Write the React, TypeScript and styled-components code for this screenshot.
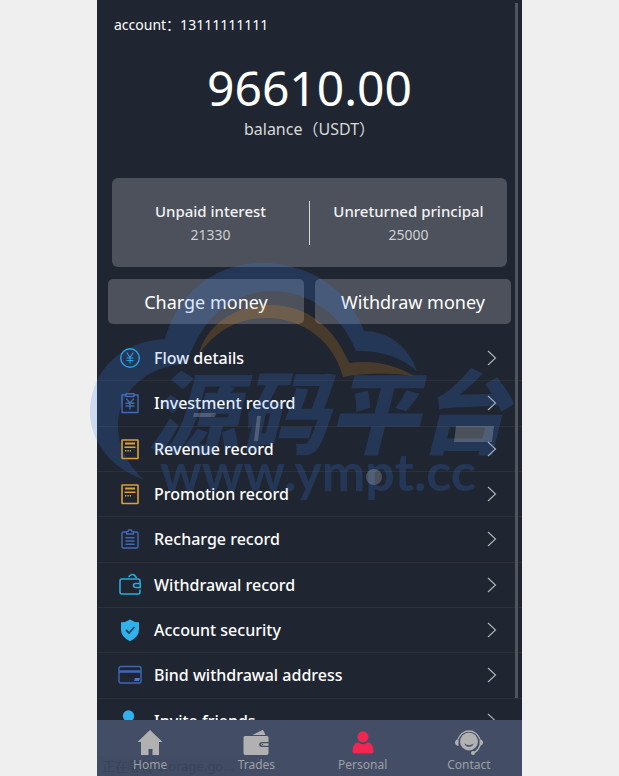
import React from "react";
import styled, { createGlobalStyle } from "styled-components";

const GlobalStyle = createGlobalStyle`
  * { box-sizing: border-box; }
  body {
    margin: 0;
    background: #efefef;
    font-family: "Noto Sans", "Noto Sans CJK SC", sans-serif;
    color: #fff;
  }
`;

const Phone = styled.div`
  position: relative;
  display: flex;
  flex-direction: column;
  width: 100%;
  max-width: 425px;
  height: 100vh;
  margin: 0 auto;
  background: #1f2632;
`;

const Content = styled.main`
  flex: 1;
  min-height: 0;
  overflow-y: auto;
  scrollbar-width: none;
`;

const Account = styled.div`
  padding: 14px 17px 0;
  font-size: 14px;
  line-height: 22px;
`;

const Balance = styled.section`
  display: flex;
  flex-direction: column;
  align-items: center;
  padding-top: 24px;
`;

const Amount = styled.div`
  font-size: 48px;
  line-height: 56px;
`;

const Caption = styled.div`
  font-size: 16px;
  line-height: 26px;
  color: #d9d9d9;
`;

const Summary = styled.section`
  display: flex;
  align-items: center;
  height: 89px;
  margin: 36px 15px 12px;
  border-radius: 6px;
  background: #4c515c;
`;

const Stat = styled.div`
  flex: 1;
  display: flex;
  flex-direction: column;
  align-items: center;
  line-height: 24px;
`;

const StatLabel = styled.span`
  font-size: 15px;
  font-weight: 500;
  color: #f2f2f2;
`;

const StatValue = styled.span`
  font-size: 14px;
  color: #d0d0d0;
`;

const Separator = styled.div`
  width: 1px;
  height: 44px;
  background: #d8d8d2;
`;

const Actions = styled.div`
  display: flex;
  gap: 11px;
  padding: 0 11px;
  margin-bottom: 12px;
`;

const ActionButton = styled.button`
  flex: 1;
  height: 45px;
  padding: 0;
  border: 0;
  border-radius: 5px;
  background: #4c515c;
  color: #fff;
  font: inherit;
  font-size: 18px;
`;

const Menu = styled.nav`
  display: grid;
  grid-template-rows: repeat(9, 1fr);
  min-height: 408px;
`;

const MenuRow = styled.a`
  display: flex;
  align-items: center;
  padding: 0 24px 0 20px;
  border-bottom: 1px solid #302f33;
  color: #fff;
  font-size: 16px;
  font-weight: 500;
  text-decoration: none;
`;

const MenuLabel = styled.span`
  flex: 1;
  padding-left: 11px;
`;

const ScrollThumb = styled.div`
  position: absolute;
  top: 3px;
  right: 4px;
  bottom: 78px;
  width: 3px;
  background: #50555a;
`;

const TabBar = styled.nav`
  position: relative;
  display: flex;
  height: 56px;
  background: #434e66;
`;

const Tab = styled.a`
  position: relative;
  flex: 1;
  display: flex;
  flex-direction: column;
  align-items: center;
  padding-top: 8px;
  color: #9d9fa2;
  font-size: 12px;
  line-height: 16px;
  text-decoration: none;

  svg { margin-bottom: 1px; }
`;

const LoadingStatus = styled.div`
  position: absolute;
  left: 0;
  bottom: 0;
  height: 20px;
  padding: 0 10px 0 5px;
  border-top-right-radius: 4px;
  background: #414b64;
  color: #3a445a;
  font-size: 13px;
  line-height: 20px;
  white-space: nowrap;
`;

const Watermark = styled.svg`
  position: absolute;
  top: 255px;
  left: -7px;
  pointer-events: none;
`;

const BrandName = styled.text`
  font-family: "Noto Sans CJK SC", sans-serif;
  font-size: 90px;
  font-weight: 900;
  font-style: italic;
`;

const BrandSite = styled.text`
  font-family: Lato, sans-serif;
  font-size: 52px;
  font-weight: 700;
`;

type IconName = "flow" | "invest" | "bill" | "clipboard" | "wallet" | "shield" | "card" | "friend";

const line = (color: string) => ({
  fill: "none",
  stroke: color,
  strokeWidth: 1.4,
  strokeLinecap: "round" as const,
  strokeLinejoin: "round" as const,
});

const drawings: Record<IconName, React.ReactNode> = {
  flow: (
    <g {...line("#2aa5e0")}>
      <circle cx="13" cy="13" r="9.3" />
      <path d="M10 8l3 4.500 3-4.500M13 12.500v5.500M10 13h6M10 15.500h6" strokeWidth="1.100" />
    </g>
  ),
  invest: (
    <g {...line("#436ab4")}>
      <path d="M9 5H5v17.500h16V5h-4M9 3.700h8v2.800H9z" />
      <path d="M9.500 9l3.500 4 3.500-4M13 13v6M9 13.200h8M9 16h8" />
    </g>
  ),
  bill: (
    <g {...line("#e0a02f")}>
      <rect x="5" y="4" width="16" height="18.500" rx="0.5" strokeWidth="1.600" />
      <path d="M8 7.500h10" strokeWidth="2" strokeLinecap="butt" />
      <path d="M8 11.300h10" />
      <path d="M8 14.800h6" strokeDasharray="1.400 1" strokeLinecap="butt" />
    </g>
  ),
  clipboard: (
    <g {...line("#4369b5")}>
      <path d="M9 6H6.500Q5 6 5 7.500v13Q5 22 6.500 22h13q1.500 0 1.500-1.500v-13Q21 6 19.500 6H17" />
      <path d="M9.500 8V6.200q0-.7.7-.7h.8q.5-1.700 2-1.700t2 1.700h.8q.7 0 .7.7V8z" />
      <path d="M9 11.800h8M9 15h8M9 18.200h8" />
    </g>
  ),
  wallet: (
    <g {...line("#2aabdf")} strokeWidth="1.6">
      <path d="M23 11V9q0-2-2-2H5Q3 7 3 9v11q0 2 2 2h16q2 0 2-2v-2" />
      <path d="M23.300 11.500h-4.500q-2.300 0-2.300 2t2.300 2h4.500z" />
      <path d="M12 4.500q3-3.500 6-.7l1.300 1.700" />
    </g>
  ),
  shield: (
    <g>
      <path d="M13 2.500q4.500 3 9 2.800V13q0 7-9 11.200Q4 20 4 13V5.300q4.500.2 9-2.800z" fill="#2fb1ec" />
      <path d="M9 13l3 3 5.500-6" fill="none" stroke="#1f3f58" strokeWidth="1.800" />
    </g>
  ),
  card: (
    <g {...line("#4066b0")}>
      <rect x="2" y="4.500" width="22" height="16.500" rx="2" />
      <path d="M2 9.500h22" strokeWidth="2.600" strokeLinecap="butt" />
      <path d="M18 16h5l-1 3h-5z" fill="#4c76c4" stroke="none" />
    </g>
  ),
  friend: (
    <g fill="#2fb1ec">
      <circle cx="11.500" cy="8" r="5.700" />
      <path d="M2 24q0-9 9.500-9t9.500 9z" />
    </g>
  ),
};

const Chevron = () => (
  <svg width="12" height="18" viewBox="0 0 12 18" fill="none" stroke="#b4b4b6" strokeWidth="1.100">
    <path d="M2 2l7.500 7L2 16" />
  </svg>
);

const menu: { icon: IconName; label: string }[] = [
  { icon: "flow", label: "Flow details" },
  { icon: "invest", label: "Investment record" },
  { icon: "bill", label: "Revenue record" },
  { icon: "bill", label: "Promotion record" },
  { icon: "clipboard", label: "Recharge record" },
  { icon: "wallet", label: "Withdrawal record" },
  { icon: "shield", label: "Account security" },
  { icon: "card", label: "Bind withdrawal address" },
  { icon: "friend", label: "Invite friends" },
];

const tabs: { label: string; art: React.ReactNode }[] = [
  {
    label: "Home",
    art: <path d="M14 2l12.500 12H23v13h-6.500v-6h-4v6H5V14H1.500z" fill="#b1b1b1" />,
  },
  {
    label: "Trades",
    art: (
      <g fill="#b1b1b1">
        <path d="M10.500 7L20 2.200q1-.5 1.500.5L23.500 7z" />
        <path d="M3 8h22q1.500 0 1.500 1.500V14H20q-2.800 0-2.800 2.500T20 19h6.500v6q0 2-2 2H3.500q-2 0-2-2V9.500Q1.500 8 3 8z" />
        <path d="M20.500 15.200h6v2.600h-6q-1.500 0-1.500-1.300t1.500-1.300z" />
        <circle cx="20.500" cy="16.500" r=".7" fill="#434e66" />
      </g>
    ),
  },
  {
    label: "Personal",
    art: (
      <g fill="#f32552">
        <circle cx="14" cy="8.800" r="5.500" />
        <path d="M3.500 23.500q0-8 5.500-9.200 5 3.700 10 0 5.500 1.200 5.500 9.200 0 2-2 2h-17q-2 0-2-2z" />
      </g>
    ),
  },
  {
    label: "Contact",
    art: (
      <g>
        <circle cx="14" cy="13.500" r="9" fill="#b1b1b1" />
        <path d="M9.500 15.500q4.500 3.500 9 0-1 3.200-4.500 3.200t-4.500-3.200z" fill="#434e66" />
        <path d="M3.200 11a11.300 11.300 0 0 1 21.600 0M25 17q-1.500 6-7 8" fill="none" stroke="#b1b1b1" strokeWidth="1.300" />
        <path d="M3.500 11v7Q0 17 0 14.500T3.500 11zM24.500 11v7q3.500-1 3.500-3.500T24.500 11z" fill="#b1b1b1" />
        <circle cx="18" cy="25" r="2" fill="#b1b1b1" />
      </g>
    ),
  },
];

export default function App() {
  return (
    <>
      <GlobalStyle />
      <Phone>
        <Content>
          <Account>account：13111111111</Account>
          <Balance>
            <Amount>96610.00</Amount>
            <Caption>balance（USDT）</Caption>
          </Balance>
          <Summary>
            <Stat>
              <StatLabel>Unpaid interest</StatLabel>
              <StatValue>21330</StatValue>
            </Stat>
            <Separator />
            <Stat>
              <StatLabel>Unreturned principal</StatLabel>
              <StatValue>25000</StatValue>
            </Stat>
          </Summary>
          <Actions>
            <ActionButton type="button">Charge money</ActionButton>
            <ActionButton type="button">Withdraw money</ActionButton>
          </Actions>
          <Menu>
            {menu.map(({ icon, label }) => (
              <MenuRow href="#" key={label}>
                <svg width="26" height="26" viewBox="0 0 26 26">{drawings[icon]}</svg>
                <MenuLabel>{label}</MenuLabel>
                <Chevron />
              </MenuRow>
            ))}
          </Menu>
        </Content>
        <ScrollThumb />
        <TabBar>
          <LoadingStatus>正在等待 storage.go...</LoadingStatus>
          {tabs.map(({ label, art }) => (
            <Tab href="#" key={label}>
              <svg width="28" height="28" viewBox="0 0 28 28">{art}</svg>
              {label}
            </Tab>
          ))}
        </TabBar>
        <Watermark width="436" height="260" viewBox="90 255 436 260" aria-hidden="true">
          <g fill="#3984fa" fillOpacity="0.19">
            <path d="M144 480C108 466 90 440 90 411C91 370 122 341 165 339C178 292 216 263 262 263C312 263 350 292 364 331C388 331 409 347 417 371C400 356 378 350 356 351C341 313 308 291 272 291C232 291 199 321 187 364C146 365 118 393 118 425C118 447 127 464 144 480Z" />
            <BrandName x="148" y="447">源码平台</BrandName>
            <BrandSite x="160" y="491">www.ympt.cc</BrandSite>
          </g>
          <path d="M199 354C207 324 236 305 270 305C307 305 334 327 349 363C373 360 394 364 414 376C388 372 364 373 343 377C334 342 304 318 266 318C237 318 215 332 199 354Z" fill="#f69014" fillOpacity="0.2" />
          <g fill="#fff" fillOpacity="0.2">
            <path d="M194 413h22l-1 4h-22zM257 416h4l-3 25h-4zM456 426h38l-2 16h-38z" />
            <ellipse cx="374" cy="477" rx="8" ry="8" />
          </g>
        </Watermark>
      </Phone>
    </>
  );
}
